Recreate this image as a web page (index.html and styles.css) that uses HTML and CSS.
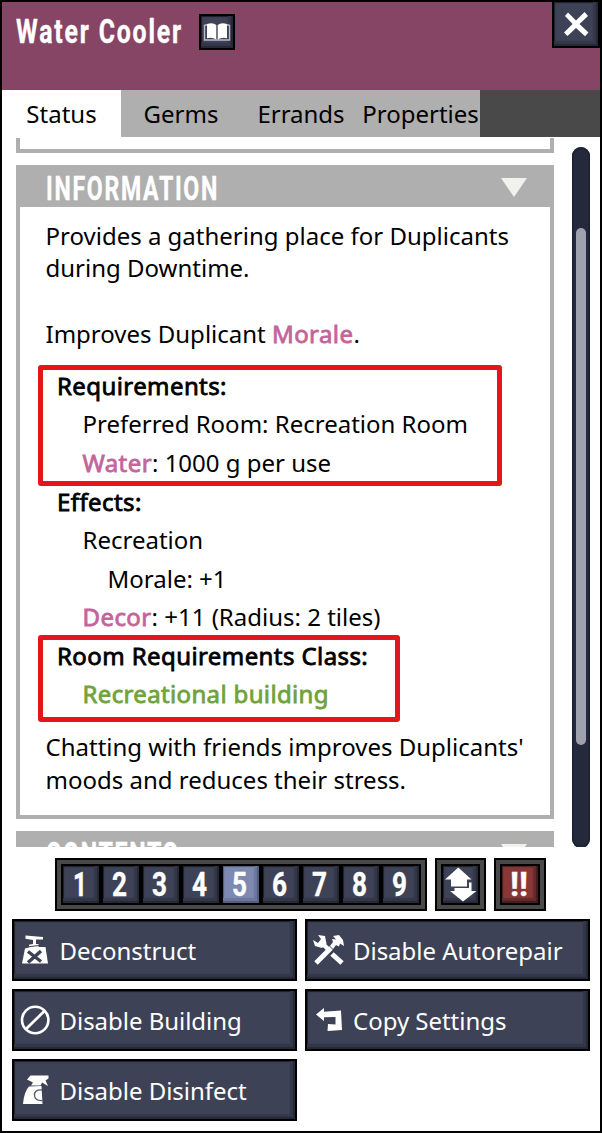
FILE: index.html
```html
<!DOCTYPE html>
<html lang="en">
<head>
<meta charset="utf-8">
<title>Water Cooler</title>
<link rel="stylesheet" href="styles.css">
</head>
<body>
<main class="window">
  <header class="header">
    <svg class="title" width="180" height="50" role="heading"><text x="0" y="43" textLength="167" lengthAdjust="spacingAndGlyphs">Water Cooler</text></svg>
    <button class="key book" aria-label="Database">
      <svg width="26" height="20" viewBox="0 0 26 20"><path d="M.5 3H4M25.5 3H22M.5 3V18H25.5V3" fill="none" stroke="#b9bcc9" stroke-width="1.4"/><path d="M3 2Q9 0 12.3 3V17.5Q8 15 3 16.2ZM23 2Q17 0 13.7 3V17.5Q18 15 23 16.2Z" fill="#fff"/></svg>
    </button>
    <button class="key close" aria-label="Close">
      <svg width="26" height="26" viewBox="0 0 26 26"><path d="M2 5L5 1.5 13 9.4 21.6 1 25 5 16.5 13 25.5 21.5 22 25.2 13 17 4.5 25 1 21.5 9.6 13Z" fill="#fff"/></svg>
    </button>
  </header>
  <nav class="tabs">
    <span class="tab active">Status</span><span class="tab">Germs</span><span class="tab">Errands</span><span class="tab">Properties</span>
  </nav>
  <div class="scroll">
    <div class="cards">
      <section class="card previous"></section>
      <section class="card info">
        <h2 class="bar"><svg class="caption" width="190" height="42"><text x="1" y="34.5" textLength="173" lengthAdjust="spacingAndGlyphs">INFORMATION</text></svg><i class="arrow"></i></h2>
        <div class="copy">
          <p>Provides a gathering place for Duplicants<br>during Downtime.<br><br>Improves Duplicant <b class="link">Morale</b>.</p>
          <div class="list">
            <div class="marked wide">
              <div class="row"><b>Requirements:</b></div>
              <div class="row in1">Preferred Room: Recreation Room</div>
              <div class="row in1"><b class="link">Water</b>: 1000 g per use</div>
            </div>
            <div class="row"><b>Effects:</b></div>
            <div class="row in1">Recreation</div>
            <div class="row in2">Morale: +1</div>
            <div class="row in1"><b class="link">Decor</b>: +11 (Radius: 2 tiles)</div>
            <div class="marked narrow">
              <div class="row"><b>Room Requirements Class:</b></div>
              <div class="row in1"><b class="good">Recreational building</b></div>
            </div>
          </div>
          <p>Chatting with friends improves Duplicants'<br>moods and reduces their stress.</p>
        </div>
      </section>
      <section class="card">
        <h2 class="bar"><svg class="caption" width="190" height="42"><text x="1" y="35" textLength="133" lengthAdjust="spacingAndGlyphs">CONTENTS</text></svg><i class="arrow"></i></h2>
      </section>
    </div>
    <div class="track"><div class="thumb"></div></div>
  </div>
  <div class="priority">
    <div class="frame">
      <button class="key num"><svg width="36" height="37"><text x="10" y="30" textLength="14" lengthAdjust="spacingAndGlyphs">1</text></svg></button>
      <button class="key num"><svg width="36" height="37"><text x="9" y="30" textLength="15" lengthAdjust="spacingAndGlyphs">2</text></svg></button>
      <button class="key num"><svg width="36" height="37"><text x="9" y="30" textLength="15" lengthAdjust="spacingAndGlyphs">3</text></svg></button>
      <button class="key num"><svg width="36" height="37"><text x="9" y="30" textLength="15" lengthAdjust="spacingAndGlyphs">4</text></svg></button>
      <button class="key num chosen"><svg width="36" height="37"><text x="9" y="30" textLength="15" lengthAdjust="spacingAndGlyphs">5</text></svg></button>
      <button class="key num"><svg width="36" height="37"><text x="9" y="30" textLength="15" lengthAdjust="spacingAndGlyphs">6</text></svg></button>
      <button class="key num"><svg width="36" height="37"><text x="9" y="30" textLength="15" lengthAdjust="spacingAndGlyphs">7</text></svg></button>
      <button class="key num"><svg width="36" height="37"><text x="9" y="30" textLength="15" lengthAdjust="spacingAndGlyphs">8</text></svg></button>
      <button class="key num"><svg width="36" height="37"><text x="9" y="30" textLength="15" lengthAdjust="spacingAndGlyphs">9</text></svg></button>
    </div>
    <div class="frame single">
      <button class="key num" aria-label="Swap"><svg width="35" height="37" viewBox="0 0 35 37"><path d="M15.3 1.5L28.5 13.5H24V20.5H8V13.5H2Z" fill="#fff"/><path d="M11.5 22H26V16.5H28.5V25H33.5L20 35.5 7 25H11.5Z" fill="#fff"/></svg></button>
    </div>
    <div class="frame single last">
      <button class="key num alert"><svg width="36" height="37"><text x="8" y="30" textLength="18" lengthAdjust="spacingAndGlyphs">!!</text></svg></button>
    </div>
  </div>
  <div class="actions">
    <button class="key action"><svg width="30" height="32" viewBox="0 0 30 32"><path d="M4.5 1.5L22 3V5.5H15V10H17.5V13H24.5L27 29.5H1L4 14.5L8 13.5V10.8L12 10V6L4.5 4.7Z" fill="#fff"/><path d="M8 12.7L18 11.5" stroke="#3e4256" stroke-width="1"/><path d="M7 17.5L20 27.5M20 17L7 28.5" stroke="#3e4256" stroke-width="3.4"/></svg><span>Deconstruct</span></button>
    <button class="key action right"><svg width="32" height="32" viewBox="0 0 32 32"><path d="M3 29L18 14" stroke="#fff" stroke-width="4.8"/><path d="M10 10L17 17" stroke="#fff" stroke-width="4.5"/><path d="M19 20L29 29" stroke="#fff" stroke-width="5"/><path d="M0 6L5 9 8 5 5 1 12 2 13.5 10 9 14 2 12ZM17 12L20 8 19 5 23 5.5 20 2 26 1 30 6 31 12 27 9.5 26 12.5 23 11 20 15Z" fill="#fff"/></svg><span>Disable Autorepair</span></button>
    <button class="key action"><svg width="30" height="32" viewBox="0 0 30 32"><circle cx="14.2" cy="16" r="13.2" fill="none" stroke="#fff" stroke-width="2.6"/><path d="M5 25L23.5 7" stroke="#fff" stroke-width="2.7"/></svg><span>Disable Building</span></button>
    <button class="key action right"><svg width="32" height="32" viewBox="0 0 32 32"><path d="M3 10.5L11 4V7.8L28 6.5 29 26 14.5 27 15 20 22.5 20.5V13L11 13.3V17Z" fill="#fff"/></svg><span>Copy Settings</span></button>
    <button class="key action"><svg width="30" height="32" viewBox="0 0 30 32"><path d="M9.5 1.5H27.5V4.5L24.5 6.5 27 12 21 8.5 19.5 11.5H10L12 8.5 6 5.5Z" fill="#fff"/><path d="M8 12.5L20.5 12 21.5 30H2Q3 17.5 8 12.5Z" fill="#fff"/><path d="M21 16Q13 15.5 13.5 21.5Q14 27 21.5 26.5" fill="none" stroke="#555b70" stroke-width="1.3"/></svg><span>Disable Disinfect</span></button>
  </div>
</main>
</body>
</html>
```
FILE: styles.css
```css
*, *::after { box-sizing: border-box; }
body { margin: 0; background: #fff; font: 24px/32.69px "Noto Sans", sans-serif; color: #000; }
svg { display: block; flex: none; overflow: visible; }
svg text { font-family: Roboto, sans-serif; font-weight: 700; fill: #fff; stroke: #fff; stroke-width: .4px; stroke-linejoin: round; }
.window { width: 602px; height: 1133px; border: 2px solid #000; overflow: hidden; display: flex; flex-direction: column; }

.header { height: 88px; flex: none; background: #864564; display: flex; align-items: flex-start; }
.title { margin: -2px 0 0 14px; font-size: 34px; letter-spacing: 2.5px; }
.key { margin: 0; padding: 0; border: 2px solid #000; background: #3e4256; box-shadow: inset -2px -2px 1px #252837, inset -5px -5px 1px #343749, inset 1px 1px 1px #1d1f2a; color: #fff; font: inherit; display: flex; align-items: center; }
.book { width: 36px; height: 36px; margin: 12px 0 0 3px; justify-content: center; }
.close { width: 48px; height: 48px; margin: -2px 0 0 auto; padding-left: 9px; }

.tabs { height: 47px; flex: none; display: flex; background: #494949; }
.tab { width: 120px; background: #afafaf; text-align: center; line-height: 47px; white-space: nowrap; }
.tab.active { width: 119px; background: #fff; }
.tab:last-child { width: 119px; }

.scroll { height: 710px; flex: none; display: flex; overflow: hidden; }
.cards { width: 538px; margin-left: 14px; display: flex; flex-direction: column; gap: 12px; }
.card { flex: none; border: 4px solid #afafaf; border-top: 0; }
.previous { height: 15px; margin-top: 1px; }
.info { height: 654px; }
.bar { height: 42px; margin: 0 -4px; padding: 0 27px 0 29px; background: #afafaf; display: flex; justify-content: space-between; }
.caption { font-size: 34px; letter-spacing: 2.5px; }
.arrow { width: 0; height: 0; margin-top: 13px; border: 13px solid transparent; border-top: 19px solid #f1f2ed; border-bottom: 0; }
.copy { padding: 12.8px 0 0 25.5px; white-space: nowrap; }
.copy p { margin: 0; }
.list { padding: 16.4px 0 17px; }
.row { height: 38.55px; line-height: 38.55px; padding-left: 11.5px; }
.in1 { padding-left: 37px; }
.in2 { padding-left: 62px; }
b { font-weight: 400; letter-spacing: .41px; -webkit-text-stroke: .8px currentColor; }
.link { color: #c4649a; }
.good { color: #70a33b; letter-spacing: .35px; }
.marked { position: relative; }
.marked::after { content: ""; position: absolute; left: -7.5px; border: 5px solid #e51617; border-radius: 3px; }
.wide::after { top: -2px; width: 464px; height: 121px; }
.narrow::after { top: -2px; width: 362px; height: 87px; }
.track { width: 18px; height: 701px; margin: 10px 0 0 18px; padding: 81px 4px 0; background: #242a3c; border-radius: 9px; box-shadow: inset 0 0 2px 1px #171c2a; }
.thumb { height: 517px; border-radius: 5px; background: #a0a1ae; }

.priority { display: flex; margin: 11px 0 0 53px; height: 53px; flex: none; }
.frame { display: flex; width: 372px; height: 53px; padding: 4px; background: #000; border: 2px solid #000; box-shadow: inset 0 0 0 4px #494949; }
.num { width: 40px; height: 41px; flex: none; font-size: 34px; line-height: 37px; }
.single { width: 51px; margin-left: 8px; }
.single .num { width: 39px; }
.last { width: 52px; }
.last .num { width: 40px; }
.chosen { background: #7d89b1; box-shadow: inset -2px -2px 1px #535d80, inset -5px -5px 1px #6d789e, inset 1px 1px 1px #545d7d; }
.alert { background: #883636; box-shadow: inset -2px -2px 1px #431c1d, inset -5px -5px 1px #672b2c, inset 1px 1px 1px #4c2021; }

.actions { display: grid; grid-template-columns: 285px 285px; grid-auto-rows: 62px; gap: 8px; margin: 8px 0 0 10px; }
.action { padding-left: 7px; white-space: nowrap; }
.action span { margin: 2px 0 0 8.5px; letter-spacing: -.03px; }
.action.right { padding-left: 6px; }
.action.right span { margin-left: 8px; }
```
